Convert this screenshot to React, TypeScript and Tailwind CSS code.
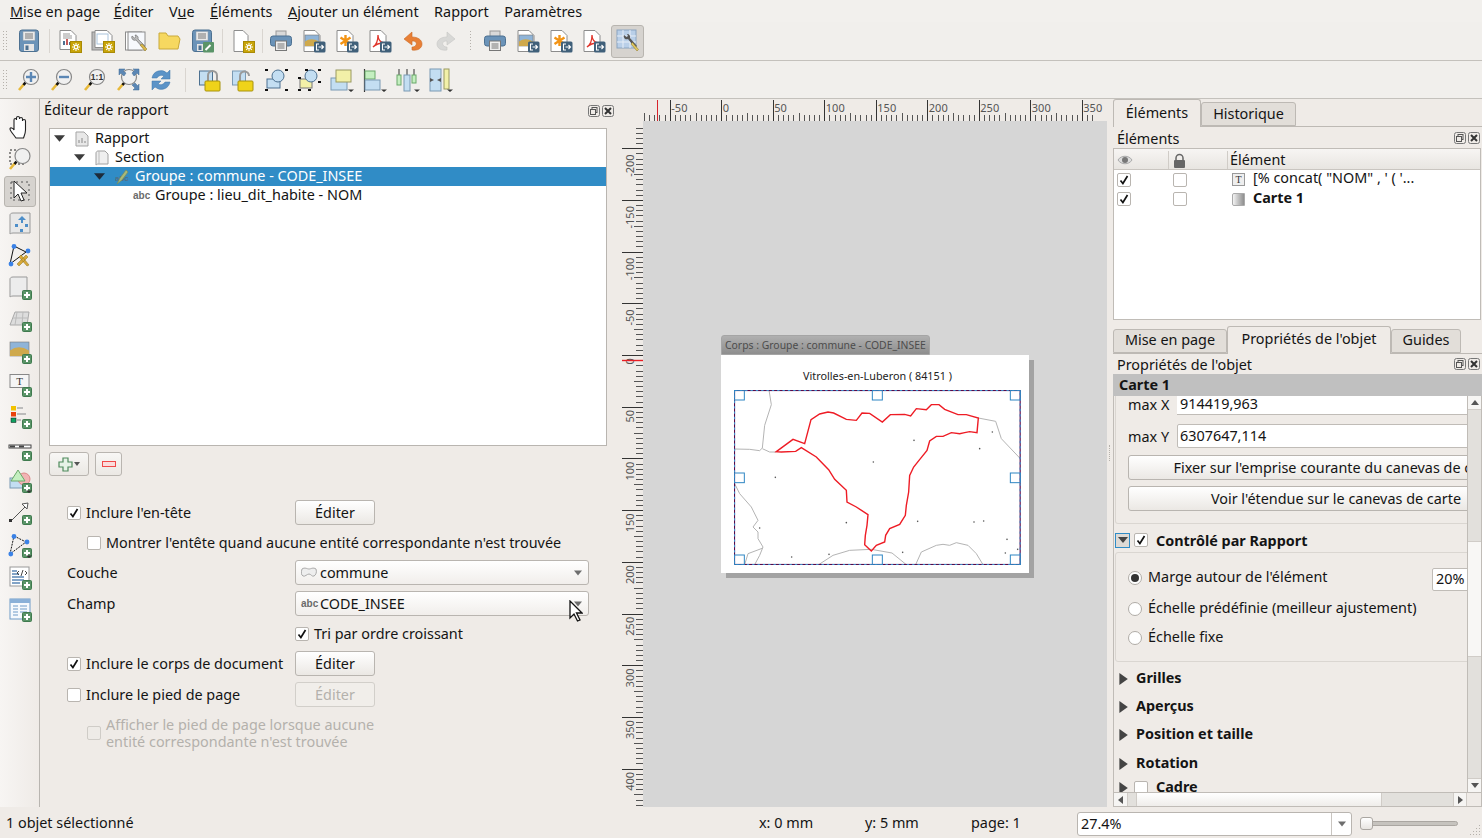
import type { ReactNode } from "react";

// shared pieces of the toolbar icons
const Ic = ({ children, s = 24 }: { children: ReactNode; s?: number }) => (
  <svg width={s} height={s} viewBox="0 0 24 24" className="shrink-0">
    {children}
  </svg>
);

const Page = ({ x = 3, w = 15, h = 20 }: { x?: number; w?: number; h?: number }) => (
  <path d={`M${x} 1.5h${w - 5}l5 5v${h - 5}h-${w}z`} fill="#fff" stroke="#8c8c8c" />
);

const Gold = () => (
  <g>
    <rect x="12.5" y="12.5" width="11" height="11" fill="#c8a408" stroke="#a98a05" />
    <path d="M18 14v8M14 18h8M15.2 15.2l5.6 5.6M20.8 15.2l-5.6 5.6" stroke="#fff" strokeWidth="1.1" />
    <circle cx="18" cy="18" r="1.6" fill="#c8a408" stroke="#fff" />
  </g>
);

const Exp = () => (
  <g>
    <rect x="12" y="12.5" width="11.5" height="11" rx="1.5" fill="#40607a" />
    <path d="M17 15h-2.5v6H17M16.5 18h5M19.5 16l2 2-2 2" fill="none" stroke="#fff" strokeWidth="1.1" />
  </g>
);

const Plus = ({ x = 14, y = 14 }: { x?: number; y?: number }) => (
  <g transform={`translate(${x} ${y})`}>
    <rect x=".5" y=".5" width="9" height="9" rx="1" fill="#5a9468" stroke="#3f7a4e" />
    <path d="M5 2v6M2 5h6" stroke="#fff" strokeWidth="2" />
  </g>
);

const Floppy = () => (
  <g>
    <rect x="2.5" y="1" width="19" height="21.5" rx="2.5" fill="#6b93b8" stroke="#4d7191" />
    <rect x="6" y="2.5" width="12" height="9" fill="#e9e9e9" stroke="#8a9aa8" strokeWidth=".5" />
    <path d="M8 5h8M8 7h8M8 9h8" stroke="#777" />
    <rect x="7" y="15" width="10" height="7" fill="#e6e6e6" />
    <rect x="8.5" y="16.5" width="3" height="4.5" fill="#4d7191" />
  </g>
);

const Printer = () => (
  <g>
    <rect x="7" y="2" width="10" height="6" fill="#d9d9d9" stroke="#999" />
    <rect x="1.5" y="7" width="21" height="10" rx="2.5" fill="#6b93b8" stroke="#4d7191" />
    <rect x="6.5" y="12" width="11" height="9.5" fill="#eee" stroke="#777" />
    <path d="M8.5 15h7M8.5 17h7M8.5 19h7" stroke="#777" />
  </g>
);

const Landscape = ({ x = 3, y = 6, w = 14, h = 11 }: { x?: number; y?: number; w?: number; h?: number }) => (
  <g>
    <rect x={x} y={y} width={w} height={h} fill="#8fb4d8" stroke="#777" strokeWidth=".6" />
    <path d={`M${x} ${y + h * 0.6}q${w * 0.45} -${h * 0.45} ${w} 0v${h * 0.4}h-${w}z`} fill="#cfa94c" />
  </g>
);

const Star = () => (
  <path d="M10.5 6v11M5.5 8.5l10 6.5M15.5 8.5l-10 6.5" stroke="#f39415" strokeWidth="2.4" fill="none" />
);

const Acrobat = () => (
  <path d="M5 18c3-2 5-7 5-12 0 5 2 7 6 8-3 0-8 1-11 4z" fill="none" stroke="#e0352b" strokeWidth="1.3" />
);

const Mag = ({ children, cx = 14 }: { children?: ReactNode; cx?: number }) => (
  <g>
    <line x1="7.5" y1="15.5" x2="2" y2="22" stroke="#e8b93a" strokeWidth="2.6" />
    <line x1="8.5" y1="14.5" x2="6.5" y2="17" stroke="#111" strokeWidth="2.6" />
    <circle cx={cx} cy="9" r="7.5" fill="#f0f0f0" stroke="#888" strokeWidth="1.2" />
    {children}
  </g>
);

const Lock = ({ open }: { open?: boolean }) => (
  <g>
    <path d={open ? "M9 13V8a4.5 4.5 0 0 1 9 0" : "M10 13V7.5a4.5 4.5 0 0 1 9 0V13"} fill="none" stroke="#999" strokeWidth="2" />
    <rect x="7" y="13" width="15" height="10" rx="1" fill="#efd31a" stroke="#a8930d" />
  </g>
);

const Cap = () => <path d="M18 21.5h6l-3 2.5z" fill="#333" />;

const BLUE = "#c3def2";
const YEL = "#f2f0a8";
const GRN = "#c4efc0";

const topIcons: Record<string, ReactNode> = {
  save: <Floppy />,
  report: (
    <>
      <Page x={2} w={16} h={19} />
      <path d="M5 5h7M5 7h9M5 9h9" stroke="#999" />
      <path d="M6 16v-4" stroke="#4d7191" strokeWidth="2" />
      <path d="M9 16v-6" stroke="#c85a5a" strokeWidth="2" />
      <path d="M12 16v-3" stroke="#4d7191" strokeWidth="2" />
      <Gold />
    </>
  ),
  reports: (
    <>
      <rect x="1" y="3" width="16" height="18" fill="#bbb" stroke="#888" />
      <Page x={4} w={17} h={17} />
      <rect x="6" y="5" width="11" height="10" fill="#fff" stroke="#aac4dc" />
      <Gold />
    </>
  ),
  manager: (
    <>
      <rect x="1.5" y="3" width="16" height="18" fill="#fff" stroke="#8c8c8c" />
      <rect x="4" y="3" width="17" height="18" fill="#f7f9fd" stroke="#8c8c8c" />
      <path d="M8 7a3 3 0 0 0 4 4l7 8 2-2-7-7a3 3 0 0 0-3-4l1 2-1.5 1z" fill="#bbb" stroke="#666" strokeWidth=".6" />
      <path d="M16 16l5 6 2-2-5-5z" fill="#d9b64a" stroke="#8a7420" strokeWidth=".5" />
    </>
  ),
  folder: <path d="M2 20V4h7l2 3h10l2 3-2 10z" fill="#f6d860" stroke="#c9a93a" />,
  saveas: (
    <>
      <Floppy />
      <rect x="13" y="13" width="11" height="10.5" rx="1" fill="#5a9468" />
      <path d="M15.5 21l5-5" stroke="#fff" strokeWidth="2" />
    </>
  ),
  newpage: (
    <>
      <Page x={3} w={14} h={21} />
      <Gold />
    </>
  ),
  print: <Printer />,
  image: (
    <>
      <Page x={2} w={16} h={21} />
      <Landscape />
      <Exp />
    </>
  ),
  svg: (
    <>
      <Page x={2} w={16} h={21} />
      <Star />
      <Exp />
    </>
  ),
  pdf: (
    <>
      <Page x={2} w={16} h={21} />
      <Acrobat />
      <Exp />
    </>
  ),
  undo: (
    <path d="M11 3L3 10l8 6v-4c4 0 5 2 4 4s-3 2-4 2v3c6 1 10-2 10-6s-4-7-10-7z" fill="#e87f35" stroke="#c96a25" strokeWidth=".6" />
  ),
  redo: (
    <path d="M13 3l8 7-8 6v-4c-4 0-5 2-4 4s3 2 4 2v3c-6 1-10-2-10-6s4-7 10-7z" fill="#d8d8d6" stroke="#c6c6c4" strokeWidth=".6" />
  ),
  atlas: (
    <>
      <rect x="2" y="1" width="19" height="18" fill="#b9cfe8" stroke="#8aa4c0" />
      <path d="M2 7h19M2 13h19M8 1v18M15 1v18" stroke="#e7eef7" />
      <path d="M9 6a3 3 0 0 0 4 4l7 9 2-2-7-8a3 3 0 0 0-3-4l1 2-1.5 1z" fill="#555" />
      <path d="M16 15l6 7 1.5-1.5-6-7z" fill="#e0c860" stroke="#8a7420" strokeWidth=".5" />
    </>
  ),
  zoomin: (
    <Mag>
      <path d="M14 4v10M9 9h10" stroke="#5b87b5" strokeWidth="2.4" />
    </Mag>
  ),
  zoomout: (
    <Mag>
      <path d="M9 9h10" stroke="#5b87b5" strokeWidth="2.4" />
    </Mag>
  ),
  zoom1: (
    <Mag>
      <text x="14" y="12" textAnchor="middle" fontSize="8.5" fontWeight="700" fill="#333" fontFamily="Liberation Sans">
        1:1
      </text>
    </Mag>
  ),
  zoomfull: (
    <>
      <Mag cx={13} />
      <path d="M3 1h6L7 3l3 2-2 3-3-3-2 2zM23 1v6l-2-2-3 3-2-3 3-3-2-1zM23 22h-6l2-2-3-3 3-2 3 3 1-2z" fill="#5b87b5" stroke="#3d6a96" strokeWidth=".5" />
    </>
  ),
  refresh: (
    <>
      <path d="M3 10a9 9 0 0 1 15-5l3-3v9h-9l3-3a5 5 0 0 0-7 2z" fill="#5b93c7" stroke="#3d75a8" strokeWidth=".5" />
      <path d="M21 14a9 9 0 0 1-15 5l-3 3v-9h9l-3 3a5 5 0 0 0 7-2z" fill="#5b93c7" stroke="#3d75a8" strokeWidth=".5" />
    </>
  ),
  lock: (
    <>
      <rect x="1.5" y="3" width="13" height="14" fill={BLUE} stroke="#4d7191" />
      <Lock />
    </>
  ),
  unlock: (
    <>
      <rect x="1.5" y="3" width="13" height="14" fill={BLUE} stroke="#7b9ab3" />
      <Lock open />
    </>
  ),
  group: (
    <>
      <rect x="3" y="11" width="13" height="9" fill={BLUE} stroke="#4d7191" />
      <circle cx="14" cy="8" r="6" fill={BLUE} stroke="#4d7191" />
      <path d="M1 1h3v2H1zM21 1h3v2h-3zM1 21h3v2H1zM21 21h3v2h-3z" fill="#111" />
    </>
  ),
  ungroup: (
    <>
      <rect x="3" y="11" width="12" height="9" fill={YEL} stroke="#777" />
      <circle cx="14" cy="8" r="6" fill={BLUE} stroke="#4d7191" />
      <path d="M1 9h3v2H1zM21 1h3v2h-3zM1 21h3v2H1zM21 13h3v2h-3zM11 21h3v2h-3zM8 1h3v2H8z" fill="#111" />
    </>
  ),
  raise: (
    <>
      <rect x="1" y="10" width="16" height="12" fill={BLUE} stroke="#7b9ab3" />
      <rect x="6" y="2" width="15" height="12" fill={YEL} stroke="#9a9a60" />
      <Cap />
    </>
  ),
  alignl: (
    <>
      <path d="M1.5 1v23" stroke="#333" strokeWidth="1.2" />
      <rect x="2" y="3" width="10" height="8" fill={GRN} stroke="#6aa86a" />
      <rect x="2" y="12" width="15" height="10" fill={BLUE} stroke="#7b9ab3" />
      <Cap />
    </>
  ),
  dist: (
    <>
      <path d="M3 1v16M11 1v22M18 1v14" stroke="#333" />
      <rect x="1" y="7" width="4" height="10" fill={GRN} stroke="#6aa86a" />
      <rect x="8" y="7" width="6" height="16" fill={BLUE} stroke="#7b9ab3" />
      <rect x="16" y="7" width="4" height="8" fill={GRN} stroke="#6aa86a" />
      <Cap />
    </>
  ),
  resize: (
    <>
      <rect x="1" y="1" width="11" height="22" fill={BLUE} stroke="#7b9ab3" />
      <path d="M1 10l4 2-4 2zM12 10l-4 2 4 2z" fill="#555" />
      <rect x="15" y="1" width="5" height="20" fill={YEL} stroke="#9a9a60" />
      <Cap />
    </>
  ),
};

const sideIcons: Record<string, ReactNode> = {
  pan: (
    <path d="M8 23c-2-3-6-7-6-9s3-1 4 1V5c0-2 2.500-2 2.500 0V3c0-2 3-2 3 0v1c0-2 3-2 3 0v2c0-2 3-2 3 0v9c0 3-1 5-2 8z" fill="#fff" stroke="#222" strokeWidth="1.1" />
  ),
  zoom: (
    <>
      <path d="M2 3h14v14H2z" fill="none" stroke="#222" strokeDasharray="2 2" />
      <Mag cx={14.500} />
    </>
  ),
  select: (
    <>
      <path d="M3 3h18v18H3z" fill="none" stroke="#555" strokeDasharray="2 3" />
      <path d="M6 2v17l4-4 3 7 3-1-3-7h6z" fill="#fff" stroke="#222" />
    </>
  ),
  move: (
    <>
      <path d="M5 1h17v20H5c-2 0-3 1-3 1V3c0-1 1-2 3-2z" fill="#e8e8e8" stroke="#999" />
      <path d="M14 4l4 4h-3v3h-2V8h-3z" fill="#4d8ec9" />
      <path d="M7 12h3v3H7zM17 12h3v3h-3zM12 17h3v3h-3z" fill="#4d8ec9" />
    </>
  ),
  node: (
    <>
      <path d="M6 2l12 6L2 20z" fill="none" stroke="#111" />
      <circle cx="6" cy="2.5" r="2.4" fill="#3b82e6" />
      <circle cx="20" cy="7" r="2.4" fill="#3b82e6" />
      <circle cx="3" cy="20" r="2.4" fill="#3b82e6" />
      <path d="M9 20l9-9 2 2-9 9zM13 11l8 10-2 1-8-9z" fill="#d9a93a" stroke="#8a7420" strokeWidth=".5" />
    </>
  ),
  map: (
    <>
      <path d="M5 1h14v19H5c-2 0-3 1-3 1V3c0-1 1-2 3-2z" fill="#ececec" stroke="#999" />
      <Plus />
    </>
  ),
  map3d: (
    <>
      <path d="M2 17L7 4h14l-2 13z" fill="#ddd" stroke="#aaa" />
      <path d="M5 10h15M9 4l-2 13M15 4l-1 13" stroke="#bbb" />
      <Plus />
    </>
  ),
  picture: (
    <>
      <Landscape x={2} y={2} w={19} h={14} />
      <Plus />
    </>
  ),
  label: (
    <>
      <rect x="2" y="1.5" width="19" height="13" fill="#f5f5f5" stroke="#888" />
      <text x="11.5" y="12" textAnchor="middle" fontSize="11" fill="#333" fontFamily="Liberation Serif">
        T
      </text>
      <Plus />
    </>
  ),
  legend: (
    <>
      <rect x="3" y="1" width="5" height="4.5" fill="#f2c200" />
      <rect x="3" y="7" width="5" height="4.5" fill="#e8420c" />
      <rect x="3" y="13" width="5" height="4.5" fill="#0fa060" stroke="#111" strokeWidth=".5" />
      <path d="M9 3h6M9 9h9M9 15h4" stroke="#aaa" strokeWidth="1.5" />
      <Plus />
    </>
  ),
  scale: (
    <>
      <rect x="1" y="8" width="22" height="3" fill="#fff" stroke="#444" />
      <path d="M2 9.500h5M11 9.500h5" stroke="#444" strokeWidth="2" />
      <Plus />
    </>
  ),
  shape: (
    <>
      <rect x="2" y="9" width="14" height="10" fill={BLUE} stroke="#7b9ab3" />
      <circle cx="16" cy="10" r="6" fill="#f2b4b4" stroke="#d88" />
      <path d="M10 1l7 11H3z" fill={GRN} stroke="#6aa86a" />
      <Plus />
      <Cap />
    </>
  ),
  arrow: (
    <>
      <path d="M3 20L18 5" stroke="#555" />
      <path d="M14 3l6-1-1 6z" fill="#fff" stroke="#555" />
      <rect x="1" y="18" width="3" height="3" fill="#333" />
      <Plus />
    </>
  ),
  nodes: (
    <>
      <path d="M6 2l12 6L2 20z" fill="none" stroke="#111" strokeDasharray="2 1" />
      <circle cx="6" cy="2.5" r="2.4" fill="#3b82e6" />
      <circle cx="19" cy="8" r="2.4" fill="#3b82e6" />
      <circle cx="2.8" cy="20" r="2.4" fill="#3b82e6" />
      <Plus />
      <Cap />
    </>
  ),
  html: (
    <>
      <rect x="2" y="1" width="19" height="19" fill="#fff" stroke="#999" />
      <path d="M4 5h5M4 8h7M4 11h12M4 14h12M4 17h8" stroke="#5b87b5" strokeWidth="1.3" />
      <path d="M11 5L9 7l2 2M17 5l2 2-2 2M15 4l-2 6" fill="none" stroke="#333" strokeWidth=".9" />
      <Plus />
    </>
  ),
  table: (
    <>
      <rect x="2" y="1" width="20" height="20" fill="#f6f9fd" stroke="#6f9bc8" />
      <rect x="2" y="1" width="20" height="4" fill="#8ab0d8" />
      <path d="M5 8h5M12 8h7M5 11h5M12 11h7M5 14h5M12 14h7M5 17h5" stroke="#6f9bc8" />
      <Plus />
    </>
  ),
};

const F0 = "text-[14.4px] leading-none text-[#141414]";
const F = `${F0} pt-[2px]`;
const FB = "text-[14.4px] leading-none text-[#141414] font-bold";

const Grip = () => (
  <svg width="6" height="22" className="shrink-0 ml-[3px] mr-[2px]">
    {[1, 4, 7, 10, 13, 16, 19].map((y) => (
      <g key={y}>
        <rect x="0" y={y} width="1" height="1" fill="#b5b1ab" />
        <rect x="3" y={y} width="1" height="1" fill="#b5b1ab" />
      </g>
    ))}
  </svg>
);

const Tool = ({ name, active }: { name: string; active?: boolean }) => (
  <div
    className={`w-[33px] h-[33px] flex items-center justify-center shrink-0 rounded-[3px] ${active ? "bg-[#d6d3cf] border border-[#b8b5b0]" : ""}`}
  >
    <Ic>{topIcons[name]}</Ic>
  </div>
);

const Sep = ({ w }: { w: string }) => (
  <div className={`${w} h-[24px] flex justify-center shrink-0`}>
    <div className="w-px h-full bg-[#d9d5d0]" />
  </div>
);

const Check = ({ on, dim }: { on?: boolean; dim?: boolean }) => (
  <div
    className={`w-[14px] h-[14px] shrink-0 border rounded-[2px] flex items-center justify-center ${dim ? "bg-[#eeebe7] border-[#cfccc7]" : "bg-white border-[#b9b5b0]"}`}
  >
    {on && (
      <svg width="10" height="10" viewBox="0 0 10 10">
        <path d="M1.5 5.5l2.4 3L8.5 1" fill="none" stroke="#111" strokeWidth="1.7" />
      </svg>
    )}
  </div>
);

const Tri = ({ dir, c = "#3c3c3c", s = 10 }: { dir: "down" | "right"; c?: string; s?: number }) => (
  <svg width={s} height={s} viewBox="0 0 10 10" className="shrink-0">
    <path d={dir === "down" ? "M0 2h10L5 8z" : "M2 0l7 5-7 5z"} fill={c} />
  </svg>
);

const Btn = ({ children, off }: { children: ReactNode; off?: boolean }) => (
  <div
    className={`w-[80px] h-[25px] rounded-[3px] border flex items-center justify-center ${F} ${off ? "border-[#d2cfca] bg-[#f1eeea] text-[#b4b1ac]!" : "border-[#b9b5b0] bg-linear-to-b from-white to-[#ebe8e4]"}`}
  >
    {children}
  </div>
);

const Combo = ({ icon, text, cursor }: { icon: ReactNode; text: string; cursor?: boolean }) => (
  <div className="relative w-[294px] h-[25px] rounded-[3px] border border-[#b9b5b0] bg-linear-to-b from-white to-[#f1eeeb] flex items-center pl-[5px] pr-[6px]">
    {icon}
    <span className={`${F} ml-[3px] flex-1`}>{text}</span>
    <Tri dir="down" c="#6e6e6e" s={8} />
    {cursor && (
      <svg width="14" height="22" viewBox="0 0 14 22" className="absolute left-[273px] top-[8px]">
        <path d="M1 1v17l4-4 3.500 7 2.500-1-3.500-7H13z" fill="#fff" stroke="#111" strokeWidth="1.3" />
      </svg>
    )}
  </div>
);

const Abc = ({ c = "#6b6b6b" }: { c?: string }) => (
  <span className="font-['Liberation_Sans'] font-bold text-[10px] leading-none w-[16px] shrink-0" style={{ color: c }}>
    abc
  </span>
);

const Float = () => (
  <div className="flex gap-[2px] shrink-0">
    <svg width="12" height="12" viewBox="0 0 12 12">
      <rect x=".5" y=".5" width="11" height="11" rx="2" fill="none" stroke="#777" />
      <rect x="4" y="2.5" width="5" height="5" fill="none" stroke="#555" />
      <rect x="2.5" y="4.5" width="5" height="5" fill="#efebe7" stroke="#555" />
    </svg>
    <svg width="12" height="12" viewBox="0 0 12 12">
      <rect x=".5" y=".5" width="11" height="11" rx="2" fill="none" stroke="#777" />
      <path d="M3 3l6 6M9 3l-6 6" stroke="#333" strokeWidth="2" />
    </svg>
  </div>
);

const TreeRow = ({ pad, sel, arrow, icon, text }: { pad: string; sel?: boolean; arrow?: boolean; icon: ReactNode; text: string }) => (
  <div className={`h-[19px] flex items-center ${pad} ${sel ? "bg-[#308cc6]" : ""}`}>
    {arrow && (
      <div className="w-[21px] shrink-0">
        <Tri dir="down" c={sel ? "#1d2b3a" : "#3c3c3c"} s={11} />
      </div>
    )}
    {icon}
    <span className={`ml-[6px] ${F0} ${sel ? "text-white!" : ""}`}>{text}</span>
  </div>
);

const HRuler = () => {
  const ticks = Array.from({ length: 88 }, (_, i) => i - 15);
  const labels = [-50, 0, 50, 100, 150, 200, 250, 300, 350];
  return (
    <svg width="485" height="22" className="block">
      {ticks.map((t) => {
        const x = Math.round(99.3 + t * 5.15) + 0.5;
        const major = t % 10 === 0;
        const mid = t % 5 === 0;
        return <line key={t} x1={x} x2={x} y1={major ? 1 : mid ? 14 : 16} y2="22" stroke={major ? "#333" : "#555"} />;
      })}
      {labels.map((l) => (
        <text key={l} x={99.3 + l * 1.03 + 1.5} y="13" fontSize="11" fill="#555" fontFamily="Noto Sans">
          {l}
        </text>
      ))}
      <line x1="35.5" x2="35.5" y1="1" y2="22" stroke="#d8242c" />
    </svg>
  );
};

const VRuler = () => {
  const ticks = Array.from({ length: 134 }, (_, i) => i - 44);
  const labels = [-200, -150, -100, -50, 0, 50, 100, 150, 200, 250, 300, 350, 400];
  return (
    <svg width="21" height="686" className="block shrink-0">
      {ticks.map((t) => {
        const y = Math.round(234 + t * 5.17) + 0.5;
        const major = t % 10 === 0;
        const mid = t % 5 === 0;
        return <line key={t} y1={y} y2={y} x1={major ? 0 : mid ? 12 : 14} x2="21" stroke={major ? "#333" : "#555"} />;
      })}
      {labels.map((l) => {
        const y = 234 + l * 1.034 + 3;
        return (
          <text key={l} transform={`translate(12 ${y + String(l).length * 6.4}) rotate(-90)`} fontSize="11" fill="#555" fontFamily="Noto Sans">
            {l}
          </text>
        );
      })}
      <line x1="0" x2="21" y1="239.5" y2="239.5" stroke="#e81c24" strokeWidth="1.4" />
    </svg>
  );
};

const RED = "200,379 250,342 285,355 304,283 330,266 355,260 372,263 410,282 440,285 457,263 480,264 518,290 542,268 585,267 603,272 620,250 650,253 665,238 688,238 705,252 745,268 770,268 806,278 802,322 780,319 765,322 750,325 725,322 700,333 680,333 660,347 652,375 628,405 612,425 600,450 597,500 590,540 587,570 570,597 540,610 528,630 525,650 500,660 485,677 465,658 467,630 472,600 475,568 440,545 412,530 410,495 375,462 357,433 320,395 275,367 258,378 215,380 200,379";
const GRAY = [
  "178,194 185,238 165,300 158,368 150,376 120,372 75,371",
  "158,370 180,380 200,380",
  "806,278 858,288 875,340 932,400",
  "75,475 90,505 125,545 145,585 130,605 145,620 145,640 160,665 150,690 135,718",
  "105,718 115,685 160,668",
  "327,718 370,690 420,675 485,672 547,683 590,718",
  "618,718 635,680 680,660 700,657 720,660 740,652 775,660 800,685 820,718",
];
const DOTS = [[613, 345], [848, 320], [810, 370], [491, 410], [197, 456], [410, 592], [624, 588], [793, 590], [822, 587], [150, 608], [892, 642], [246, 695], [358, 687], [579, 681], [887, 683], [924, 672]];
const HANDLES = [[73, 194], [487, 194], [901, 194], [73, 442], [901, 442], [73, 688], [487, 688], [901, 688]];

const MapDrawing = () => (
  <svg width="287" height="175" viewBox="73 194 861 525" className="block">
    {GRAY.map((p) => (
      <polyline key={p} points={p} fill="none" stroke="#b4b4b4" strokeWidth="3" />
    ))}
    {DOTS.map(([x, y]) => (
      <circle key={`${x}-${y}`} cx={x} cy={y} r="2.4" fill="#555" />
    ))}
    <polygon points={RED} fill="none" stroke="#ee1c25" strokeWidth="4.2" />
    <rect x="74.500" y="195.500" width="857" height="522" fill="none" stroke="#5a0a4a" strokeWidth="3.500" />
    <rect x="74.500" y="195.500" width="857" height="522" fill="none" stroke="#3c8ecb" strokeWidth="3.500" strokeDasharray="7 9" />
    {HANDLES.map(([x, y]) => (
      <rect key={`${x}-${y}`} x={x + 1} y={y + 1} width="30" height="29" fill="none" stroke="#2f86c4" strokeWidth="3" />
    ))}
  </svg>
);

const Tab = ({ text, active, w, pb = "" }: { text: string; active?: boolean; w: string; pb?: string }) => (
  <div
    className={`${w} ${pb} border border-[#bdb9b4] rounded-t-[3px] flex items-center justify-center ${F0} ${active ? "h-[28px] bg-[#efebe7] border-b-0 -mb-px" : "h-[24px] bg-[#e2ded9]"}`}
  >
    {text}
  </div>
);

const Section = ({ text, mt }: { text: string; mt: string }) => (
  <div className={`flex items-center h-[15px] pl-[3px] ${mt}`}>
    <Tri dir="right" c="#444" s={12} />
    <span className={`${FB} ml-[7px]`}>{text}</span>
  </div>
);

const Radio = ({ on, text, mt }: { on?: boolean; text: string; mt: string }) => (
  <div className={`flex items-center h-[15px] pl-[12px] ${mt}`}>
    <div className="w-[14px] h-[14px] rounded-full border border-[#b0aca7] bg-white flex items-center justify-center shrink-0">
      {on && <div className="w-[8px] h-[8px] rounded-full bg-[#333]" />}
    </div>
    <span className={`${F0} ml-[6px]`}>{text}</span>
  </div>
);

export default function App() {
  return (
    <div className="w-[1482px] h-[838px] overflow-hidden flex flex-col bg-[#efebe7] font-['Noto_Sans',sans-serif]">
      {/* menu */}
      <div className={`h-[22px] flex items-center gap-[15.5px] pl-[10px] bg-[#f2f0ed] ${F}`}>
        <span className="-mr-[2px]"><u>M</u>ise en page</span>
        <span><u>É</u>diter</span>
        <span>V<u>u</u>e</span>
        <span><u>É</u>léments</span>
        <span><u>A</u>jouter un élément</span>
        <span>Rapport</span>
        <span>Paramètres</span>
      </div>

      {/* toolbars */}
      <div className="h-[39px] flex items-center border-b border-[#c4c1bc] bg-[#f1efec]">
        <Grip />
        <div className="w-[1.5px]" />
        <Tool name="save" />
        <Sep w="w-[8px]" />
        <Tool name="report" />
        <Tool name="reports" />
        <Tool name="manager" />
        <Tool name="folder" />
        <Tool name="saveas" />
        <Sep w="w-[8px]" />
        <Tool name="newpage" />
        <Sep w="w-[5px]" />
        <Tool name="print" />
        <Tool name="image" />
        <Tool name="svg" />
        <Tool name="pdf" />
        <Tool name="undo" />
        <Tool name="redo" />
        <div className="w-[16px] flex justify-center">
          <svg width="4" height="22">
            {[1, 4, 7, 10, 13, 16, 19].map((y) => (
              <rect key={y} x="1" y={y} width="1" height="1" fill="#b5b1ab" />
            ))}
          </svg>
        </div>
        <Tool name="print" />
        <Tool name="image" />
        <Tool name="svg" />
        <Tool name="pdf" />
        <Tool name="atlas" active />
      </div>
      <div className="h-[38px] flex items-center border-b border-[#c4c1bc] bg-[#f1efec]">
        <Grip />
        <div className="w-[1.5px]" />
        <Tool name="zoomin" />
        <Tool name="zoomout" />
        <Tool name="zoom1" />
        <Tool name="zoomfull" />
        <Tool name="refresh" />
        <Sep w="w-[16px]" />
        <Tool name="lock" />
        <Tool name="unlock" />
        <Tool name="group" />
        <Tool name="ungroup" />
        <Tool name="raise" />
        <Tool name="alignl" />
        <Tool name="dist" />
        <Tool name="resize" />
      </div>

      <div className="h-[708px] flex">
        {/* side toolbar */}
        <div className="w-[40px] shrink-0 flex flex-col items-center pt-[12px] border-r border-[#b8b5b0] bg-linear-to-r from-[#f7f5f3] to-[#efebe7]">
          {Object.keys(sideIcons).map((k) => (
            <div key={k} className="h-[32.2px] flex items-center justify-center shrink-0">
              <div className={`w-[32px] h-[31px] flex items-center justify-center rounded-[3px] ${k === "select" ? "bg-[#d6d3cf] border border-[#b8b5b0]" : ""}`}>
                <Ic>{sideIcons[k]}</Ic>
              </div>
            </div>
          ))}
        </div>

        {/* report panel */}
        <div className="w-[582px] shrink-0 flex flex-col">
          <div className="h-[23px] mb-[6px] flex items-center pl-[4px] pr-[8px] justify-between">
            <span className={F0}>Éditeur de rapport</span>
            <Float />
          </div>
          <div className="ml-[9px] w-[558px] h-[318px] border border-[#b9b5b0] bg-white">
            <TreeRow
              pad="pl-[4px]"
              arrow
              text="Rapport"
              icon={
                <svg width="14" height="16" viewBox="0 0 14 16" className="shrink-0">
                  <path d="M1 1h8l4 4v10H1z" fill="#e8e8e8" stroke="#a5a5a5" />
                  <path d="M4 12V9M7 12V7M10 12v-2" stroke="#888" />
                </svg>
              }
            />
            <TreeRow
              pad="pl-[24px]"
              arrow
              text="Section"
              icon={
                <svg width="14" height="16" viewBox="0 0 14 16" className="shrink-0">
                  <path d="M3 1h7l3 3v10H3c-1 0-2 1-2 1V3c0-1 1-2 2-2z" fill="#efefef" stroke="#a0a0a0" />
                  <path d="M4 1v13" stroke="#bbb" />
                </svg>
              }
            />
            <TreeRow
              pad="pl-[44px]"
              sel
              arrow
              text="Groupe : commune - CODE_INSEE"
              icon={
                <svg width="14" height="16" viewBox="0 0 14 16" className="shrink-0">
                  <text x="0" y="12" fontSize="8" fontWeight="700" fill="#4f6f86" fontFamily="Liberation Sans">abc</text>
                  <path d="M2 15l3-6 6-8 2 2-6 8z" fill="#a8b878" stroke="#7a8a50" strokeWidth=".6" />
                </svg>
              }
            />
            <TreeRow pad="pl-[83px]" icon={<Abc />} text="Groupe : lieu_dit_habite - NOM" />
          </div>
          <div className="ml-[9px] mt-[6px] flex gap-[6px]">
            <div className="w-[40px] h-[24px] border border-[#b9b5b0] rounded-[3px] bg-linear-to-b from-[#f8f7f5] to-[#ebe8e4] flex items-center justify-center gap-[1px]">
              <svg width="15" height="15" viewBox="0 0 15 15">
                <path d="M5 1h5v4h4v5h-4v4H5v-4H1V5h4z" fill="#e7f2e7" stroke="#4f8a5c" strokeWidth="1.2" />
              </svg>
              <svg width="6" height="4" viewBox="0 0 6 4">
                <path d="M0 0h6L3 4z" fill="#555" />
              </svg>
            </div>
            <div className="w-[27px] h-[24px] border border-[#b9b5b0] rounded-[3px] bg-linear-to-b from-[#f8f7f5] to-[#ebe8e4] flex items-center justify-center">
              <div className="w-[14px] h-[6px] border border-[#ef4a4a] bg-[#fbdcdc]" />
            </div>
          </div>

          {/* form */}
          <div className="mt-[24px] pl-[27px] flex flex-col">
            <div className="flex items-center h-[25px]">
              <div className="w-[228px] flex items-center gap-[5px]">
                <Check on />
                <span className={F}>Inclure l'en-tête</span>
              </div>
              <Btn>Éditer</Btn>
            </div>
            <div className="flex items-center h-[25px] mt-[5px] pl-[20px] gap-[5px]">
              <Check />
              <span className={F}>Montrer l'entête quand aucune entité correspondante n'est trouvée</span>
            </div>
            <div className="flex items-center h-[25px] mt-[5px]">
              <span className={`w-[228px] ${F}`}>Couche</span>
              <Combo
                text="commune"
                icon={
                  <svg width="16" height="12" viewBox="0 0 16 12" className="shrink-0">
                    <path d="M1 2c3-2 5 0 7 0s4-2 7 0c1 3 0 6-2 7s-3-2-5-2-4 3-6 2-2-4-1-7z" fill="#eee" stroke="#aaa" />
                  </svg>
                }
              />
            </div>
            <div className="flex items-center h-[25px] mt-[6px]">
              <span className={`w-[228px] ${F}`}>Champ</span>
              <Combo text="CODE_INSEE" icon={<Abc />} cursor />
            </div>
            <div className="flex items-center h-[25px] mt-[5px] pl-[228px] gap-[5px]">
              <Check on />
              <span className={F}>Tri par ordre croissant</span>
            </div>
            <div className="flex items-center h-[25px] mt-[5px]">
              <div className="w-[228px] flex items-center gap-[5px]">
                <Check on />
                <span className={F}>Inclure le corps de document</span>
              </div>
              <Btn>Éditer</Btn>
            </div>
            <div className="flex items-center h-[25px] mt-[6px]">
              <div className="w-[228px] flex items-center gap-[5px]">
                <Check />
                <span className={F}>Inclure le pied de page</span>
              </div>
              <Btn off>Éditer</Btn>
            </div>
            <div className="flex items-center mt-[9px] pl-[20px] gap-[5px]">
              <Check dim />
              <div className="text-[14.4px] leading-[17px] text-[#b4b1ac]">
                <div>Afficher le pied de page lorsque aucune</div>
                <div>entité correspondante n'est trouvée</div>
              </div>
            </div>
          </div>
        </div>

        {/* layout canvas */}
        <div className="w-[485px] shrink-0 flex flex-col">
          <HRuler />
          <div className="flex h-[686px]">
            <VRuler />
            <div className="relative flex-1 bg-[#d6d6d6]">
              <div className="absolute left-[78px] top-[214px] w-[209px] h-[20px] rounded-t-[3px] border border-[#a5a5a5] bg-linear-to-b from-[#b0b0b0] to-[#8e8e8e] flex items-center pl-[3px] text-[10.4px] leading-none text-[#4c4c4c]">
                Corps : Groupe : commune - CODE_INSEE
              </div>
              <div className="absolute left-[78px] top-[234px] w-[308px] h-[218px] bg-white shadow-[5px_5px_0_#a3a3a3] flex flex-col pt-[14px]">
                <div className="pl-[5px] text-center text-[10.8px] leading-[13px] text-[#222]">Vitrolles-en-Luberon ( 84151 )</div>
                <div className="mt-[8px] ml-[13px]">
                  <MapDrawing />
                </div>
              </div>
            </div>
          </div>
        </div>

        {/* splitter */}
        <div className="w-[6px] shrink-0 flex items-center justify-center">
          <div className="w-[2px] h-[16px] border-l border-dotted border-[#b5b1ab]" />
        </div>

        {/* right docks */}
        <div className="w-[369px] shrink-0 flex flex-col">
          <div className="h-[28px] flex items-end border-b border-[#bdb9b4]">
            <Tab text="Éléments" active w="w-[88px]" />
            <Tab text="Historique" w="w-[95px]" />
          </div>
          <div className="h-[21px] flex items-center justify-between pl-[4px] pr-[2px]">
            <span className={`${F0} pt-[4px]`}>Éléments</span>
            <Float />
          </div>
          <div className="h-[172px] mr-[1px] border border-[#c0bcb7] bg-white">
            <div className={`grid grid-cols-[55px_59px_1fr] h-[21px] bg-linear-to-b from-[#f7f5f3] to-[#e8e5e1] border-b border-[#c9c5c0] ${F}`}>
              <div className="flex items-center pl-[3px] border-r border-[#d0ccc7]">
                <svg width="16" height="12" viewBox="0 0 16 12">
                  <path d="M1 6c3-5 11-5 14 0-3 5-11 5-14 0z" fill="#ddd" stroke="#aaa" />
                  <circle cx="8" cy="6" r="3" fill="#777" />
                </svg>
              </div>
              <div className="flex items-center pl-[4px] border-r border-[#d0ccc7]">
                <svg width="13" height="15" viewBox="0 0 13 15">
                  <path d="M3 7V5a3.5 3.5 0 0 1 7 0v2" fill="none" stroke="#666" strokeWidth="1.5" />
                  <rect x="1" y="7" width="11" height="8" rx="1" fill="#666" />
                </svg>
              </div>
              <div className="flex items-center pl-[2px]">Élément</div>
            </div>
            <div className="grid grid-cols-[56px_59px_1fr] h-[19px] items-center">
              <div className="pl-[3px]"><Check on /></div>
              <div className="pl-[3px]"><Check /></div>
              <div className="flex items-center pl-[3px] gap-[8px]">
                <div className="w-[13px] h-[13px] border border-[#999] bg-[#eee] flex items-center justify-center font-['Liberation_Serif'] text-[10px] leading-none text-[#333]">T</div>
                <span className={`${F0} pb-[2px]`}>[% concat( "NOM" , ' ( '...</span>
              </div>
            </div>
            <div className="grid grid-cols-[56px_59px_1fr] h-[20px] items-center">
              <div className="pl-[3px]"><Check on /></div>
              <div className="pl-[3px]"><Check /></div>
              <div className="flex items-center pl-[3px] gap-[8px]">
                <div className="w-[13px] h-[13px] rounded-l-[2px] bg-linear-to-r from-[#f4f4f4] to-[#8f8f8f] border border-[#aaa]" />
                <span className={`${FB} pb-[2px]`}>Carte 1</span>
              </div>
            </div>
          </div>

          <div className="h-[6px]" />
          <div className="h-[28px] flex items-end border-b border-[#bdb9b4]">
            <Tab text="Mise en page" w="w-[114px]" pb="pb-[2px]" />
            <Tab text="Propriétés de l'objet" active w="w-[164px]" pb="pb-[2px]" />
            <Tab text="Guides" w="w-[70px]" pb="pb-[2px]" />
          </div>
          <div className="h-[20px] flex items-center justify-between pl-[4px] pr-[2px]">
            <span className={F}>Propriétés de l'objet</span>
            <Float />
          </div>
          <div className={`h-[22px] bg-[#c0c0c0] flex items-center pl-[6px] pt-px ${FB}`}>Carte 1</div>

          <div className="flex-1 min-h-0 border-l border-r border-b border-[#c0bcb7] flex flex-col">
            <div className="flex-1 min-h-0 flex">
              <div className="w-[353px] shrink-0 overflow-hidden">
                <div className="ml-px w-[600px] h-[128px] border border-t-0 border-[#dad6d1] rounded-b-[3px] pl-[12px]">
                  <div className="flex items-center h-[19px]">
                    <span className={`w-[49px] ${F0}`}>max X</span>
                    <div className={`w-[367px] h-[19px] bg-white border-b border-[#c0bcb7] pl-[3px] pt-px ${F0}`}>914419,963</div>
                  </div>
                  <div className="flex items-center h-[24px] mt-[9px]">
                    <span className={`w-[49px] ${F}`}>max Y</span>
                    <div className={`w-[367px] h-[24px] bg-white border border-[#c0bcb7] rounded-[2px] pl-[2px] flex items-center ${F0}`}>6307647,114</div>
                  </div>
                  <div className={`w-[416px] h-[25px] mt-[7px] border border-[#b9b5b0] rounded-[3px] bg-linear-to-b from-white to-[#ebe8e4] flex items-center justify-center ${F}`}>
                    Fixer sur l'emprise courante du canevas de carte
                  </div>
                  <div className={`w-[416px] h-[25px] mt-[6px] border border-[#b9b5b0] rounded-[3px] bg-linear-to-b from-white to-[#ebe8e4] flex items-center justify-center ${F}`}>
                    Voir l'étendue sur le canevas de carte
                  </div>
                </div>
                <div className="flex items-center h-[22px] mt-[5px] mb-px pl-px">
                  <div className="w-[15px] h-[15px] border border-[#308cc6] bg-[#dedad5] flex items-center justify-center">
                    <Tri dir="down" c="#444" />
                  </div>
                  <div className="ml-[4px]"><Check on /></div>
                  <span className={`${FB} pt-[2px] ml-[8px]`}>Contrôlé par Rapport</span>
                </div>
                <div className="ml-px w-[600px] h-[110px] border border-[#dad6d1] rounded-[3px] relative">
                  <Radio on text="Marge autour de l'élément" mt="mt-[17px]" />
                  <Radio text="Échelle prédéfinie (meilleur ajustement)" mt="mt-[16px]" />
                  <Radio text="Échelle fixe" mt="mt-[14px]" />
                  <div className={`absolute left-[316px] top-[15px] w-[60px] h-[23px] bg-white border border-[#c0bcb7] rounded-[2px] pl-[3px] flex items-center ${F0}`}>20%</div>
                </div>
                <Section text="Grilles" mt="mt-[9px]" />
                <Section text="Aperçus" mt="mt-[13px]" />
                <Section text="Position et taille" mt="mt-[13px]" />
                <Section text="Rotation" mt="mt-[14px]" />
                <div className="flex items-center h-[15px] pl-[3px] mt-[9px]">
                  <Tri dir="right" c="#444" s={12} />
                  <div className="ml-[5px]"><Check /></div>
                  <span className={`${FB} ml-[8px]`}>Cadre</span>
                </div>
              </div>
              <div className="w-[14px] shrink-0 border-l border-[#c0bcb7] flex flex-col bg-[#e2e0dc]">
                <div className="h-[14px] bg-[#f6f5f3] flex items-center justify-center border-b border-[#d0ccc7]">
                  <svg width="8" height="5" viewBox="0 0 8 5"><path d="M0 5h8L4 0z" fill="#555" /></svg>
                </div>
                <div className="h-[131px]" />
                <div className="h-[116px] bg-[#f8f7f5] border-y border-[#d0ccc7]" />
                <div className="flex-1" />
                <div className="h-[14px] bg-[#f6f5f3] flex items-center justify-center border-t border-[#d0ccc7]">
                  <svg width="8" height="5" viewBox="0 0 8 5"><path d="M0 0h8L4 5z" fill="#555" /></svg>
                </div>
              </div>
            </div>
            <div className="h-[14px] shrink-0 border-t border-[#c0bcb7] flex">
              <div className="w-[14px] bg-[#f6f5f3] border-r border-[#d0ccc7] flex items-center justify-center">
                <svg width="5" height="8" viewBox="0 0 5 8"><path d="M5 0v8L0 4z" fill="#555" /></svg>
              </div>
              <div className="w-[8px] bg-[#e2e0dc]" />
              <div className="w-[246px] bg-linear-to-b from-white to-[#efedea] border-x border-[#d0ccc7]" />
              <div className="w-[71px] bg-[#e2e0dc]" />
              <div className="w-[14px] bg-[#f6f5f3] border-x border-[#d0ccc7] flex items-center justify-center">
                <svg width="5" height="8" viewBox="0 0 5 8"><path d="M0 0v8l5-4z" fill="#555" /></svg>
              </div>
            </div>
          </div>
        </div>
      </div>

      {/* status bar */}
      <div className={`h-[31px] flex items-center pl-[6px] ${F}`}>
        <span className="w-[753px]">1 objet sélectionné</span>
        <span className="w-[106px]">x: 0 mm</span>
        <span className="w-[106px]">y: 5 mm</span>
        <span className="w-[106px]">page: 1</span>
        <div className="w-[275px] h-[24px] bg-white border border-[#b9b5b0] rounded-[3px] flex items-center pl-[3px]">
          <span className="flex-1 pt-px">27.4%</span>
          <div className="w-[20px] h-full border-l border-[#c9c5c0] flex items-center justify-center">
            <Tri dir="down" c="#6e6e6e" s={8} />
          </div>
        </div>
        <div className="ml-[8px] w-[98px] h-[5px] rounded-full bg-[#c6c3be] border border-[#aaa6a1] relative">
          <div className="absolute -left-px -top-[5px] w-[13px] h-[13px] rounded-[3px] border border-[#aaa6a1] bg-linear-to-b from-white to-[#e8e5e1]" />
        </div>
        <svg width="12" height="12" className="ml-[12px] self-end mb-[2px]">
          {[[9, 1], [6, 4], [9, 4], [3, 7], [6, 7], [9, 7], [0, 10], [3, 10], [6, 10], [9, 10]].map(([x, y]) => (
            <rect key={`${x}-${y}`} x={x} y={y} width="1" height="1" fill="#b5b1ab" />
          ))}
        </svg>
      </div>
    </div>
  );
}
